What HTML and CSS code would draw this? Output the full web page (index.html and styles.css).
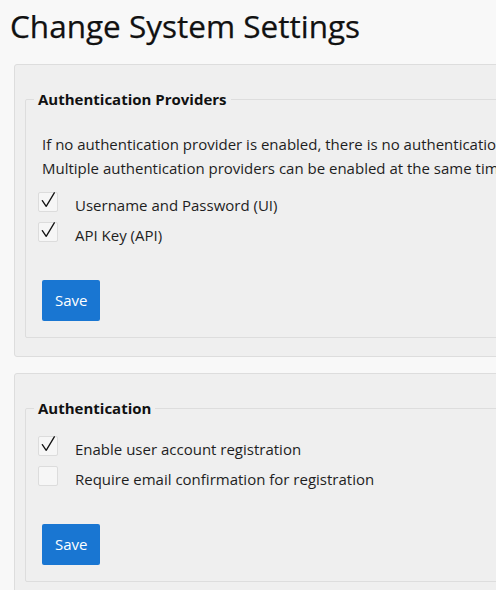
FILE: index.html
```html
<!DOCTYPE html>
<html lang="en">
<head>
<meta charset="utf-8">
<title>Change System Settings</title>
<link rel="stylesheet" href="styles.css">
</head>
<body>
<h1 class="title">Change System Settings</h1>

<div class="panel">
  <fieldset class="group">
    <legend class="group-title">Authentication Providers</legend>
    <p class="note">If no authentication provider is enabled, there is no authentication required to access the application.<br>Multiple authentication providers can be enabled at the same time.</p>
    <div class="options options-after-note">
      <label class="option">
        <span class="box"><svg class="tick" viewBox="0 0 20 20"><path d="M4.3 8.6 L8.2 14.3 L16.3 0.8"/></svg></span>
        <span class="option-text">Username and Password (UI)</span>
      </label>
      <label class="option">
        <span class="box"><svg class="tick" viewBox="0 0 20 20"><path d="M4.3 8.6 L8.2 14.3 L16.3 0.8"/></svg></span>
        <span class="option-text">API Key (API)</span>
      </label>
    </div>
    <button class="btn" type="button">Save</button>
  </fieldset>
</div>

<div class="panel">
  <fieldset class="group">
    <legend class="group-title">Authentication</legend>
    <div class="options">
      <label class="option">
        <span class="box"><svg class="tick" viewBox="0 0 20 20"><path d="M4.3 8.6 L8.2 14.3 L16.3 0.8"/></svg></span>
        <span class="option-text">Enable user account registration</span>
      </label>
      <label class="option">
        <span class="box"></span>
        <span class="option-text">Require email confirmation for registration</span>
      </label>
    </div>
    <button class="btn" type="button">Save</button>
  </fieldset>
</div>
</body>
</html>
```

FILE: styles.css
```css
html, body {
  overflow: hidden;
}

body {
  margin: 0;
  padding: 0;
  background: #f8f8f8;
  font-family: "Open Sans", "Noto Sans", sans-serif;
  font-size: 15px;
  color: #1e1e1e;
}

.title {
  margin: 6px 0 18px 10px;
  font-size: 31.5px;
  font-weight: 400;
  line-height: 40px;
  color: #111;
  white-space: nowrap;
  -webkit-text-stroke: 0.25px #111;
}

.panel {
  width: 900px;
  margin: 0 0 16px 14px;
  padding: 24px 0 18px 10px;
  background: #efefef;
  border: 1px solid #dddddd;
  border-radius: 3px;
}

.group {
  margin: 0;
  padding: 0 0 16px 8px;
  border: 1px solid #dddddd;
  border-radius: 2px;
  min-width: 0;
}

.group-title {
  padding: 0 4px;
  font-size: 15px;
  font-weight: 700;
  line-height: 20px;
  color: #111;
}

.note {
  margin: 23px 0 0 0;
  padding-left: 8px;
  line-height: 24px;
  white-space: nowrap;
}

.options {
  margin-top: 18px;
}

.options-after-note {
  margin-top: 12px;
}

.option {
  display: flex;
  align-items: flex-start;
  height: 30px;
  margin-left: 4px;
}

.box {
  flex: none;
  width: 20px;
  height: 20px;
  box-sizing: border-box;
  border: 1px solid #dcdcdc;
  border-radius: 2px;
  background: #f6f6f6;
  position: relative;
}

.tick {
  position: absolute;
  left: -1px;
  top: -1px;
  width: 20px;
  height: 20px;
  overflow: visible;
  fill: none;
  stroke: #111;
  stroke-width: 1.3;
  stroke-linecap: round;
  stroke-linejoin: round;
}

.option-text {
  margin: 1px 0 0 17px;
  line-height: 24px;
  white-space: nowrap;
}

.btn {
  display: block;
  margin: 28px 0 0 8px;
  height: 41px;
  padding: 0 13px;
  border: none;
  border-radius: 2px;
  background: #1976d2;
  color: #fff;
  font-family: inherit;
  font-size: 15px;
  line-height: 41px;
}
```
